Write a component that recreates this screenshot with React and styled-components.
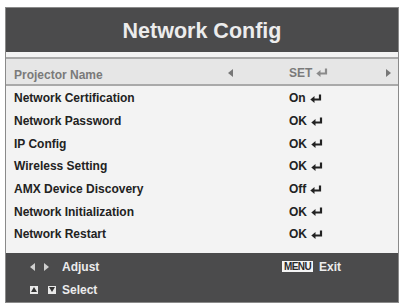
import styled, { createGlobalStyle } from "styled-components";

const GlobalStyle = createGlobalStyle`
  body {
    margin: 0;
    background: #ffffff;
    font-family: "Liberation Sans", Arial, sans-serif;
  }
`;

const items = [
  { label: "Projector Name", value: "SET", active: true },
  { label: "Network Certification", value: "On" },
  { label: "Network Password", value: "OK" },
  { label: "IP Config", value: "OK" },
  { label: "Wireless Setting", value: "OK" },
  { label: "AMX Device Discovery", value: "Off" },
  { label: "Network Initialization", value: "OK" },
  { label: "Network Restart", value: "OK" },
];

const Frame = styled.div`
  margin: 7px 0 0 5px;
  width: 394px;
  height: 296px;
  display: flex;
  flex-direction: column;
  border: 1px solid #8a8a8a;
  box-sizing: border-box;
`;

const Header = styled.div`
  height: 44px;
  background: #4b4b4c;
  display: flex;
  align-items: center;
  justify-content: center;
  color: #ececec;
  font-size: 21.5px;
  font-weight: 700;
  padding-top: 2px;
  box-sizing: border-box;
`;

const Body = styled.div`
  flex: 1;
  background: #f3f3f3;
  padding-top: 5px;
  box-sizing: border-box;
`;

const Row = styled.div`
  display: grid;
  grid-template-columns: 214px 61px 97px auto;
  align-items: center;
  height: ${(p) => (p.$active ? "29px" : "22.7px")};
  padding: ${(p) => (p.$active ? "2px" : "0")} 0 0 8px;
  box-sizing: border-box;
  background: ${(p) => (p.$active ? "#e6e6e6" : "transparent")};
  border-top: ${(p) => (p.$active ? "2px solid #a9a9a9" : "none")};
  border-bottom: ${(p) => (p.$active ? "2px solid #a9a9a9" : "none")};
  color: ${(p) => (p.$active ? "#7a7a7a" : "#222222")};
  font-size: 12px;
  font-weight: 700;
  margin-bottom: ${(p) => (p.$active ? "1px" : "0")};
`;

const Label = styled.span`
  padding-top: ${(p) => (p.$active ? "5px" : "0")};
`;

const Value = styled.span`
  display: flex;
  align-items: center;
  gap: 4px;
`;

const Slot = styled.span`
  display: flex;
  align-items: center;
`;

const Arrow = styled.span`
  display: block;
  width: 0;
  height: 0;
  border-top: 4px solid transparent;
  border-bottom: 4px solid transparent;
  ${(p) =>
    p.$dir === "left"
      ? `border-right: 5px solid ${p.$color};`
      : `border-left: 5px solid ${p.$color};`}
`;

const Footer = styled.div`
  height: 49px;
  background: #4b4b4c;
  display: grid;
  grid-template-columns: 252px auto;
  grid-template-rows: 23px 23px;
  align-items: center;
  padding: 2px 0 0 24px;
  box-sizing: border-box;
  color: #ececec;
  font-size: 12px;
  font-weight: 700;
`;

const Hint = styled.div`
  display: flex;
  align-items: center;
  gap: 6px;
`;

const Keys = styled.span`
  display: flex;
  align-items: center;
  gap: ${(p) => p.$gap || 9}px;
  width: ${(p) => p.$width || 26}px;
`;

const KeyBox = styled.span`
  width: 8px;
  height: 8px;
  background: #e8e8e8;
  display: flex;
  align-items: center;
  justify-content: center;
`;

const MenuKey = styled.span`
  background: #f4f4f4;
  color: #2a2a2a;
  font-size: 10px;
  font-weight: 700;
  letter-spacing: -0.6px;
  padding: 0 2px;
  line-height: 11px;
`;

const Enter = ({ color }) => (
  <svg width="12" height="9" viewBox="0 0 12 9">
    <path d="M10 0.5 V5.5 H3.5" stroke={color} strokeWidth="2.2" fill="none" />
    <path d="M0.3 5.5 L4.5 2 V9 Z" fill={color} />
  </svg>
);

const SmallTri = ({ up }) => (
  <svg width="6" height="5" viewBox="0 0 6 5">
    <path d={up ? "M0 5 L3 0 L6 5 Z" : "M0 0 L3 5 L6 0 Z"} fill="#333" />
  </svg>
);

const App = () => {
  return (
    <>
      <GlobalStyle />
      <Frame>
        <Header>Network Config</Header>
        <Body>
          {items.map((item) => {
            const color = item.active ? "#8a8a8a" : "#222222";
            return (
              <Row key={item.label} $active={item.active}>
                <Label $active={item.active}>{item.label}</Label>
                <Slot>{item.active && <Arrow $dir="left" $color="#777" />}</Slot>
                <Value>
                  {item.value}
                  <Enter color={color} />
                </Value>
                <Slot>{item.active && <Arrow $dir="right" $color="#777" />}</Slot>
              </Row>
            );
          })}
        </Body>
        <Footer>
          <Hint>
            <Keys>
              <Arrow $dir="left" $color="#cfcfcf" />
              <Arrow $dir="right" $color="#cfcfcf" />
            </Keys>
            Adjust
          </Hint>
          <Hint>
            <MenuKey>MENU</MenuKey>
            Exit
          </Hint>
          <Hint>
            <Keys $gap={10}>
              <KeyBox>
                <SmallTri up />
              </KeyBox>
              <KeyBox>
                <SmallTri />
              </KeyBox>
            </Keys>
            Select
          </Hint>
        </Footer>
      </Frame>
    </>
  );
};

export default App;
